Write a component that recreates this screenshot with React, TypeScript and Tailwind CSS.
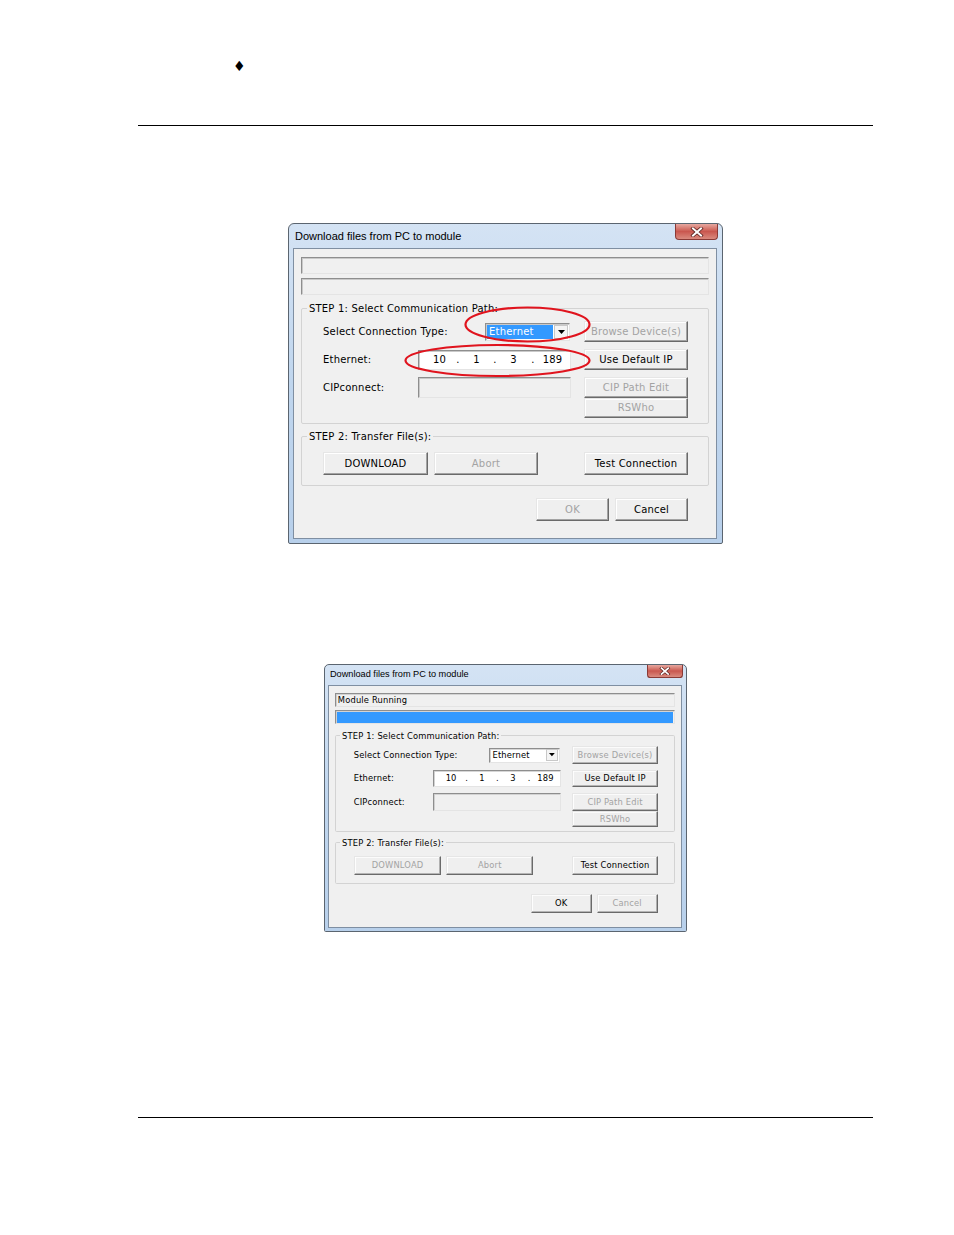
import React from 'react';

const sunken =
  'border border-t-[#8e8e8e] border-l-[#8e8e8e] border-b-[#e4e4e4] border-r-[#e4e4e4] shadow-[inset_1px_1px_0_#c9c9c9]';

function Btn({ label, className, disabled }: { label: string; className: string; disabled?: boolean }) {
  return (
    <div
      className={`${className} flex items-center justify-center bg-[#efefef] border border-t-[#e6e6e6] border-l-[#e6e6e6] border-r-[#6a6a6a] border-b-[#6a6a6a] shadow-[inset_-1px_-1px_0_#a3a3a3,inset_1px_1px_0_#ffffff] leading-none ${
        disabled ? 'text-[#a3a3a3]' : 'text-black'
      }`}
    >
      {label}
    </div>
  );
}

function Group({ title, className, children }: { title: string; className: string; children: React.ReactNode }) {
  return (
    <div className={`relative mx-[7px] border border-[#d3d3d3] rounded-[2px] ${className}`}>
      <span className="absolute -top-[6px] left-[5px] px-[2px] bg-[#f0f0f0] leading-[12px]">{title}</span>
      {children}
    </div>
  );
}

function CloseButton() {
  return (
    <div className="absolute right-[4px] top-0 w-[43px] h-[16px] rounded-b-[4px] border border-t-0 border-[#8a3a36] bg-gradient-to-b from-[#e6a8a0] via-[#c9574f] to-[#d98a7f] flex items-center justify-center">
      <svg width="14" height="10" viewBox="0 0 14 10">
        <path d="M3 1.5 L11 8.5 M11 1.5 L3 8.5" stroke="#5b2320" strokeWidth="3.6" strokeLinecap="square" />
        <path d="M3 1.5 L11 8.5 M11 1.5 L3 8.5" stroke="#ffffff" strokeWidth="2" strokeLinecap="square" />
      </svg>
    </div>
  );
}

function Combo({ highlight }: { highlight?: boolean }) {
  return (
    <div className={`w-[85px] h-[18px] bg-white flex items-stretch p-[1px] ${sunken}`}>
      <div
        className={`flex-1 flex items-center pl-[2px] mr-[1px] ${highlight ? 'bg-[#3399ff] text-white' : 'text-black'}`}
      >
        Ethernet
      </div>
      <div className="w-[14px] flex items-center justify-center bg-[#f4f4f4] border border-[#c8c8c8]">
        <svg width="7" height="4" viewBox="0 0 7 4">
          <path d="M0 0 H7 L3.5 4 Z" fill="#000" />
        </svg>
      </div>
    </div>
  );
}

function Dialog({ running }: { running?: boolean }) {
  return (
    <div className="relative w-[435px] h-[321px] flex flex-col border border-[#5b6570] rounded-t-[6px] rounded-b-[2px] bg-gradient-to-b from-[#d4e3f4] via-[#c0d6ee] to-[#b8d0eb] font-['DejaVu_Sans',sans-serif] text-[10px] tracking-[0.2px] text-black">
      <div className="h-[24px] shrink-0 flex items-center pl-[6px] font-['Liberation_Sans',Arial,sans-serif] text-[11px] tracking-normal">
        Download files from PC to module
      </div>
      <CloseButton />
      <div className="flex-1 ml-[4px] mr-[5px] mb-[4px] border border-[#7f8fa2] bg-[#f0f0f0] flex flex-col">
        <div className={`mt-[8px] mx-[7px] h-[17px] flex items-center pl-[2px] leading-none ${sunken}`}>
          {running ? 'Module Running' : ''}
        </div>
        <div className={`mt-[4px] mx-[7px] h-[17px] p-[1px] ${sunken}`}>
          {running && <div className="h-full bg-[#3399ff]" />}
        </div>

        <Group title="STEP 1: Select Communication Path:" className="mt-[13px] h-[116px] pt-[12px] pl-[21px]">
          <div className="flex items-center h-[21px]">
            <div className="w-[162px]">Select Connection Type:</div>
            <Combo highlight={!running} />
            <Btn label="Browse Device(s)" className="ml-[14px] w-[104px] h-[21px]" disabled />
          </div>
          <div className="flex items-center h-[21px] mt-[7px]">
            <div className="w-[95px]">Ethernet:</div>
            <div className={`w-[153px] h-[20px] bg-white flex items-center pl-[8px] leading-none ${sunken}`}>
              <span className="w-[25px] text-center">10</span>
              <span className="w-[12px] text-center">.</span>
              <span className="w-[25px] text-center">1</span>
              <span className="w-[12px] text-center">.</span>
              <span className="w-[25px] text-center">3</span>
              <span className="w-[14px] text-center">.</span>
              <span className="w-[25px] text-center">189</span>
            </div>
            <Btn label="Use Default IP" className="ml-[13px] w-[104px] h-[21px]" />
          </div>
          <div className="flex items-start mt-[7px]">
            <div className="w-[95px] h-[21px] flex items-center">CIPconnect:</div>
            <div className={`w-[153px] h-[21px] bg-[#f0f0f0] ${sunken}`} />
            <div className="ml-[13px] flex flex-col">
              <Btn label="CIP Path Edit" className="w-[104px] h-[21px]" disabled />
              <Btn label="RSWho" className="w-[104px] h-[20px]" disabled />
            </div>
          </div>
        </Group>

        <Group title="STEP 2: Transfer File(s):" className="mt-[12px] h-[50px] pt-[15px] pl-[21px]">
          <div className="flex">
            <Btn label="DOWNLOAD" className="w-[105px] h-[23px]" disabled={running} />
            <Btn label="Abort" className="ml-[6px] w-[104px] h-[23px]" disabled />
            <Btn label="Test Connection" className="ml-[46px] w-[104px] h-[23px]" />
          </div>
        </Group>

        <div className="mt-[12px] flex justify-end pr-[28px]">
          <Btn label="OK" className="w-[73px] h-[23px]" disabled={!running} />
          <Btn label="Cancel" className="ml-[6px] w-[73px] h-[23px]" disabled={running} />
        </div>
      </div>

      {!running && (
        <svg className="absolute left-0 top-0 pointer-events-none" width="433" height="319" viewBox="0 0 433 319">
          <ellipse cx="238.5" cy="100.5" rx="62" ry="17" fill="none" stroke="#e0141e" strokeWidth="2.2" />
          <ellipse cx="208.5" cy="136.5" rx="92" ry="15.5" fill="none" stroke="#e0141e" strokeWidth="2.2" />
        </svg>
      )}
    </div>
  );
}

export default function App() {
  return (
    <div className="w-[954px] h-[1235px] bg-white flex flex-col">
      <div className="mt-[58px] h-[16px] pl-[233px] leading-[16px] text-[14px] font-['DejaVu_Sans',sans-serif] text-black">
        ♦
      </div>
      <div className="mt-[51px] ml-[138px] w-[735px] h-px bg-black" />

      <div className="mt-[97px] ml-[288px] h-[321px]">
        <Dialog />
      </div>

      <div className="mt-[120px] ml-[324px] h-[267px]">
        <div className="[zoom:0.835]">
          <Dialog running />
        </div>
      </div>

      <div className="mt-[186px] ml-[138px] w-[735px] h-px bg-black" />
    </div>
  );
}
